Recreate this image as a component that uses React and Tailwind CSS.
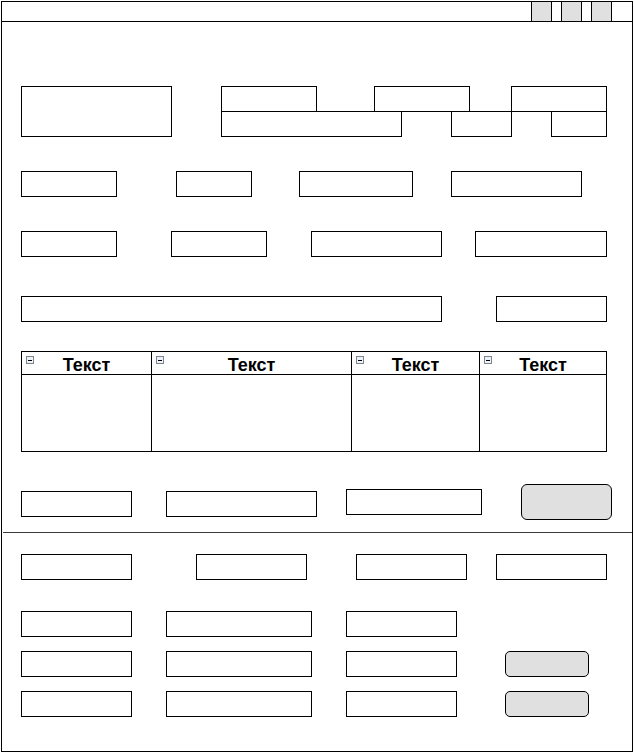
const FONT = { fontFamily: '"Liberation Sans", Arial, sans-serif' };

function Field({ className = "" }) {
  return <div className={`h-[26px] shrink-0 border border-black bg-white ${className}`} />;
}

function GrayBtn({ className = "" }) {
  return <div className={`shrink-0 border border-black bg-[#e0e0e0] ${className}`} />;
}

function Collapse() {
  return (
    <span className="absolute left-[4px] top-[4px] w-[8px] h-[8px] border border-[#7a8590] bg-[#eef2f6] flex items-center justify-center">
      <span className="block w-[4px] h-px bg-black" />
    </span>
  );
}

const COLS = ["w-[130px]", "w-[200px]", "w-[128px]", "w-[126px]"];

function Grid() {
  return (
    <div className="mt-[29px] ml-[19px] w-[586px] h-[101px] border border-black flex">
      {COLS.map((w, i) => (
        <div key={i} className={`${w} shrink-0 flex flex-col ${i < 3 ? "border-r border-black" : ""}`}>
          <div className="relative h-[23px] border-b border-black text-center text-[18px] font-bold leading-[16px] pt-[5px] text-black">
            <Collapse />
            Текст
          </div>
          <div className="flex-1" />
        </div>
      ))}
    </div>
  );
}

export default function App() {
  return (
    <div className="w-[634px] h-[752px] bg-white pt-px" style={FONT}>
      <div className="ml-px w-[632px] h-[751px] border border-black flex flex-col">
        {/* title bar */}
        <div className="h-[20px] shrink-0 border-b border-black flex justify-end gap-[9px] pr-[20px]">
          <div className="w-[21px] h-full bg-[#e0e0e0] border-x border-black" />
          <div className="w-[21px] h-full bg-[#e0e0e0] border-x border-black" />
          <div className="w-[21px] h-full bg-[#e0e0e0] border-x border-black" />
        </div>

        {/* header block */}
        <div className="mt-[64px] pl-[19px] flex items-start">
          <div className="w-[151px] h-[51px] border border-black shrink-0" />
          <div className="ml-[49px] flex flex-col">
            <div className="flex">
              <Field className="w-[96px]" />
              <Field className="ml-[57px] w-[96px]" />
              <Field className="ml-[41px] w-[96px]" />
            </div>
            <div className="flex -mt-px">
              <Field className="w-[181px]" />
              <Field className="ml-[49px] w-[61px]" />
              <Field className="ml-[39px] w-[56px]" />
            </div>
          </div>
        </div>

        <div className="mt-[34px] pl-[19px] flex">
          <Field className="w-[96px]" />
          <Field className="ml-[59px] w-[76px]" />
          <Field className="ml-[47px] w-[114px]" />
          <Field className="ml-[38px] w-[131px]" />
        </div>

        <div className="mt-[34px] pl-[19px] flex">
          <Field className="w-[96px]" />
          <Field className="ml-[54px] w-[96px]" />
          <Field className="ml-[44px] w-[131px]" />
          <Field className="ml-[33px] w-[132px]" />
        </div>

        <div className="mt-[39px] pl-[19px] flex">
          <Field className="w-[421px]" />
          <Field className="ml-[54px] w-[111px]" />
        </div>

        <Grid />

        <div className="mt-[32px] pl-[19px] flex items-start">
          <Field className="mt-[7px] w-[111px]" />
          <Field className="mt-[7px] ml-[34px] w-[151px]" />
          <Field className="mt-[5px] ml-[29px] w-[136px]" />
          <GrayBtn className="ml-[39px] w-[91px] h-[36px] rounded-[6px]" />
        </div>

        {/* divider */}
        <div className="mt-[12px] ml-px h-px bg-[#3a3a3a]" />

        <div className="mt-[21px] pl-[19px] flex">
          <Field className="w-[111px]" />
          <Field className="ml-[64px] w-[111px]" />
          <Field className="ml-[49px] w-[111px]" />
          <Field className="ml-[29px] w-[111px]" />
        </div>

        <div className="mt-[31px] pl-[19px] flex">
          <Field className="w-[111px]" />
          <Field className="ml-[34px] w-[146px]" />
          <Field className="ml-[34px] w-[111px]" />
        </div>

        <div className="mt-[14px] pl-[19px] flex">
          <Field className="w-[111px]" />
          <Field className="ml-[34px] w-[146px]" />
          <Field className="ml-[34px] w-[111px]" />
          <GrayBtn className="ml-[48px] w-[84px] h-[26px] rounded-[5px]" />
        </div>

        <div className="mt-[14px] pl-[19px] flex">
          <Field className="w-[111px]" />
          <Field className="ml-[34px] w-[146px]" />
          <Field className="ml-[34px] w-[111px]" />
          <GrayBtn className="ml-[48px] w-[84px] h-[26px] rounded-[5px]" />
        </div>
      </div>
    </div>
  );
}
